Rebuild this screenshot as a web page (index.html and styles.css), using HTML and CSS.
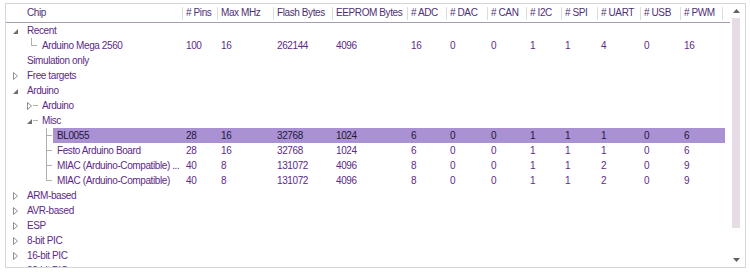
FILE: index.html
```html
<!DOCTYPE html>
<html>
<head>
<meta charset="utf-8">
<link rel="stylesheet" href="styles.css">
</head>
<body>
<div class="tree">
  <div class="main">
    <div class="header">
      <div class="hcell first">Chip</div>
      <div class="hcell"># Pins</div>
      <div class="hcell">Max MHz</div>
      <div class="hcell">Flash Bytes</div>
      <div class="hcell">EEPROM Bytes</div>
      <div class="hcell"># ADC</div>
      <div class="hcell"># DAC</div>
      <div class="hcell"># CAN</div>
      <div class="hcell"># I2C</div>
      <div class="hcell"># SPI</div>
      <div class="hcell"># UART</div>
      <div class="hcell"># USB</div>
      <div class="hcell last"># PWM</div>
    </div>
    <div class="rows">
      <div class="row l0">
        <div class="gutter"><svg class="exp" width="5" height="5" viewBox="0 0 5 5"><path d="M5 0V5H0Z"/></svg></div>
        <div class="cells"><div class="c">Recent</div></div>
      </div>
      <div class="row l1">
        <div class="gutter elbow"></div>
        <div class="cells"><div class="c">Arduino Mega 2560</div><div class="c">100</div><div class="c">16</div><div class="c">262144</div><div class="c">4096</div><div class="c">16</div><div class="c">0</div><div class="c">0</div><div class="c">1</div><div class="c">1</div><div class="c">4</div><div class="c">0</div><div class="c">16</div></div>
      </div>
      <div class="row l0">
        <div class="gutter"></div>
        <div class="cells"><div class="c">Simulation only</div></div>
      </div>
      <div class="row l0">
        <div class="gutter"><svg class="col" width="5" height="8" viewBox="0 0 5 8"><path d="M0.5 0.5L4.5 4L0.5 7.5Z"/></svg></div>
        <div class="cells"><div class="c">Free targets</div></div>
      </div>
      <div class="row l0">
        <div class="gutter"><svg class="exp" width="5" height="5" viewBox="0 0 5 5"><path d="M5 0V5H0Z"/></svg></div>
        <div class="cells"><div class="c">Arduino</div></div>
      </div>
      <div class="row l1">
        <div class="gutter"><svg class="col" width="5" height="8" viewBox="0 0 5 8"><path d="M0.5 0.5L4.5 4L0.5 7.5Z"/></svg><span class="dash"></span></div>
        <div class="cells"><div class="c">Arduino</div></div>
      </div>
      <div class="row l1">
        <div class="gutter"><svg class="exp" width="5" height="5" viewBox="0 0 5 5"><path d="M5 0V5H0Z"/></svg><span class="dash"></span></div>
        <div class="cells"><div class="c">Misc</div></div>
      </div>
      <div class="row l2 sel">
        <div class="gutter tee"></div>
        <div class="cells"><div class="c">BL0055</div><div class="c">28</div><div class="c">16</div><div class="c">32768</div><div class="c">1024</div><div class="c">6</div><div class="c">0</div><div class="c">0</div><div class="c">1</div><div class="c">1</div><div class="c">1</div><div class="c">0</div><div class="c">6</div></div>
      </div>
      <div class="row l2">
        <div class="gutter tee"></div>
        <div class="cells"><div class="c">Festo Arduino Board</div><div class="c">28</div><div class="c">16</div><div class="c">32768</div><div class="c">1024</div><div class="c">6</div><div class="c">0</div><div class="c">0</div><div class="c">1</div><div class="c">1</div><div class="c">1</div><div class="c">0</div><div class="c">6</div></div>
      </div>
      <div class="row l2">
        <div class="gutter tee"></div>
        <div class="cells"><div class="c">MIAC (Arduino-Compatible) ...</div><div class="c">40</div><div class="c">8</div><div class="c">131072</div><div class="c">4096</div><div class="c">8</div><div class="c">0</div><div class="c">0</div><div class="c">1</div><div class="c">1</div><div class="c">2</div><div class="c">0</div><div class="c">9</div></div>
      </div>
      <div class="row l2">
        <div class="gutter elbow"></div>
        <div class="cells"><div class="c">MIAC (Arduino-Compatible)</div><div class="c">40</div><div class="c">8</div><div class="c">131072</div><div class="c">4096</div><div class="c">8</div><div class="c">0</div><div class="c">0</div><div class="c">1</div><div class="c">1</div><div class="c">2</div><div class="c">0</div><div class="c">9</div></div>
      </div>
      <div class="row l0">
        <div class="gutter"><svg class="col" width="5" height="8" viewBox="0 0 5 8"><path d="M0.5 0.5L4.5 4L0.5 7.5Z"/></svg></div>
        <div class="cells"><div class="c">ARM-based</div></div>
      </div>
      <div class="row l0">
        <div class="gutter"><svg class="col" width="5" height="8" viewBox="0 0 5 8"><path d="M0.5 0.5L4.5 4L0.5 7.5Z"/></svg></div>
        <div class="cells"><div class="c">AVR-based</div></div>
      </div>
      <div class="row l0">
        <div class="gutter"><svg class="col" width="5" height="8" viewBox="0 0 5 8"><path d="M0.5 0.5L4.5 4L0.5 7.5Z"/></svg></div>
        <div class="cells"><div class="c">ESP</div></div>
      </div>
      <div class="row l0">
        <div class="gutter"><svg class="col" width="5" height="8" viewBox="0 0 5 8"><path d="M0.5 0.5L4.5 4L0.5 7.5Z"/></svg></div>
        <div class="cells"><div class="c">8-bit PIC</div></div>
      </div>
      <div class="row l0">
        <div class="gutter"><svg class="col" width="5" height="8" viewBox="0 0 5 8"><path d="M0.5 0.5L4.5 4L0.5 7.5Z"/></svg></div>
        <div class="cells"><div class="c">16-bit PIC</div></div>
      </div>
      <div class="row l0">
        <div class="gutter"><svg class="col" width="5" height="8" viewBox="0 0 5 8"><path d="M0.5 0.5L4.5 4L0.5 7.5Z"/></svg></div>
        <div class="cells"><div class="c">32-bit PIC</div></div>
      </div>
    </div>
  </div>
  <div class="scroll">
    <div class="arrow"><svg width="7" height="4" viewBox="0 0 7 4"><path d="M3.5 0L7 4H0Z"/></svg></div>
    <div class="thumb"></div>
    <div class="spacer"></div>
    <div class="arrow"><svg width="7" height="4" viewBox="0 0 7 4"><path d="M0 0H7L3.5 4Z"/></svg></div>
  </div>
</div>
</body>
</html>
```

FILE: styles.css
```css
* { box-sizing: border-box; }
html, body { margin: 0; padding: 0; background: #fff; }
body {
  font-family: "Liberation Sans", Arial, sans-serif;
  font-size: 10px;
  letter-spacing: -0.4px;
  color: #5d2a88;
  --cols: 35px 56px 59px 75px 39px 41px 39px 35px 36px 43px 40px 43px;
}
.tree {
  margin: 3px 0 0 5px;
  width: 741px;
  height: 265px;
  border: 1px solid #d6d6d6;
  display: flex;
  overflow: hidden;
}
.main { width: 724px; flex: none; overflow: hidden; }
.header {
  display: grid;
  grid-template-columns: 176px var(--cols);
  height: 19px;
  border-bottom: 1px solid #a79cb2;
  color: #4e3174;
}
.hcell {
  line-height: 18px;
  padding-left: 4px;
  white-space: nowrap;
  overflow: hidden;
  background: linear-gradient(#dcdcdc, #dcdcdc) left 0 top 3px / 1px 13px no-repeat;
}
.hcell.first { padding-left: 21px; background: none; }
.hcell.last {
  background:
    linear-gradient(#dcdcdc, #dcdcdc) left 0 top 3px / 1px 13px no-repeat,
    linear-gradient(#dcdcdc, #dcdcdc) right 0 top 3px / 1px 13px no-repeat;
}
.row { display: flex; height: 15px; line-height: 15px; }
.gutter {
  flex: none;
  height: 15px;
  display: flex;
  align-items: center;
  justify-content: flex-end;
}
.l0 .gutter { width: 17px; padding-right: 5px; }
.l1 .gutter { width: 32px; }
.l2 .gutter { width: 47px; }
.exp { fill: #6e6e6e; margin-top: 2px; }
.col { fill: none; stroke: #8e8e8e; stroke-width: 1; }
.dash { width: 5px; height: 1px; background: #b0b0b0; margin-left: 1px; }
.tee {
  background:
    linear-gradient(#b0b0b0, #b0b0b0) right 6px top 0 / 1px 15px no-repeat,
    linear-gradient(#b0b0b0, #b0b0b0) right 1px top 7px / 5px 1px no-repeat;
}
.elbow {
  background:
    linear-gradient(#b0b0b0, #b0b0b0) right 6px top 0 / 1px 8px no-repeat,
    linear-gradient(#b0b0b0, #b0b0b0) right 1px top 7px / 5px 1px no-repeat;
}
.cells { flex: none; display: grid; padding-right: 2px; }
.l0 .cells { grid-template-columns: 159px var(--cols); }
.l1 .cells { grid-template-columns: 144px var(--cols); }
.l2 .cells { grid-template-columns: 129px var(--cols); }
.c {
  padding-left: 4px;
  white-space: nowrap;
  overflow: hidden;
  text-overflow: ellipsis;
}
.sel .cells { background: #aa91d4; color: #24183a; }
.scroll {
  width: 15px;
  flex: none;
  padding-left: 2px;
  display: flex;
  flex-direction: column;
}
.arrow {
  width: 8px;
  height: 14px;
  display: flex;
  align-items: center;
  justify-content: center;
  fill: #606060;
}
.thumb { width: 8px; height: 210px; background: #e5dce6; }
.spacer { flex: 1; }
```
